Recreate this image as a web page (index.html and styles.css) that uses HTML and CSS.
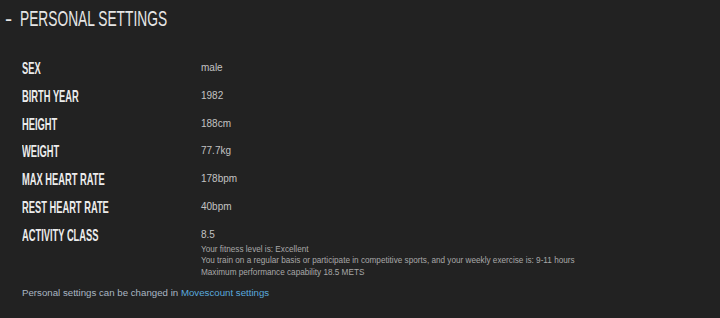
FILE: index.html
```html
<!DOCTYPE html>
<html>
<head>
<meta charset="utf-8">
<link rel="stylesheet" href="styles.css">
</head>
<body>
<div class="page">
  <h1 class="title"><span class="dash">-</span><span class="title-text">PERSONAL SETTINGS</span></h1>
  <div class="rows">
    <div class="row"><div class="label"><span>SEX</span></div><div class="value">male</div></div>
    <div class="row"><div class="label"><span>BIRTH YEAR</span></div><div class="value">1982</div></div>
    <div class="row"><div class="label"><span>HEIGHT</span></div><div class="value">188cm</div></div>
    <div class="row"><div class="label"><span>WEIGHT</span></div><div class="value">77.7kg</div></div>
    <div class="row"><div class="label"><span>MAX HEART RATE</span></div><div class="value">178bpm</div></div>
    <div class="row"><div class="label"><span>REST HEART RATE</span></div><div class="value">40bpm</div></div>
    <div class="row"><div class="label"><span>ACTIVITY CLASS</span></div>
      <div class="value">8.5
        <div class="notes">
          <div>Your fitness level is: Excellent</div>
          <div>You train on a regular basis or participate in competitive sports, and your weekly exercise is: 9-11 hours</div>
          <div>Maximum performance capability 18.5 METS</div>
        </div>
      </div>
    </div>
  </div>
  <p class="footer">Personal settings can be changed in <a class="link" href="#">Movescount settings</a></p>
</div>
</body>
</html>
```
FILE: styles.css
```css
html, body {
  margin: 0;
  padding: 0;
  background: #222222;
}
.page {
  width: 720px;
  height: 318px;
  overflow: hidden;
  font-family: "Liberation Sans", Arial, sans-serif;
}
.title {
  margin: 0;
  padding: 4px 0 0 5px;
  height: 30px;
  display: flex;
  align-items: center;
  font-family: "Liberation Sans Narrow", "Liberation Sans", sans-serif;
  font-weight: normal;
  font-size: 21.5px;
  color: #e6e6e6;
  white-space: nowrap;
}
.dash {
  width: 15px;
}
.title-text {
  display: inline-block;
  transform: scaleX(0.64);
  transform-origin: left center;
}
.rows {
  padding: 24px 0 0 22px;
}
.row {
  display: flex;
  align-items: flex-start;
  min-height: 27.8px;
}
.label {
  width: 179px;
  flex: none;
  font-family: "Liberation Sans Narrow", "Liberation Sans", sans-serif;
  font-weight: bold;
  font-size: 16.5px;
  line-height: 20px;
  color: #ececec;
  white-space: nowrap;
}
.label span {
  display: inline-block;
  transform: scaleX(0.565);
  transform-origin: left center;
}
.value {
  font-size: 10px;
  line-height: 20px;
  color: #c2c2c2;
}
.notes {
  font-size: 8.2px;
  line-height: 11.5px;
  color: #a8a8a8;
  margin-top: -1px;
}
.footer {
  margin: 9px 0 0 22px;
  font-size: 9.7px;
  color: #a9b6c2;
}
.link {
  color: #5aa9dd;
  text-decoration: none;
}
```
